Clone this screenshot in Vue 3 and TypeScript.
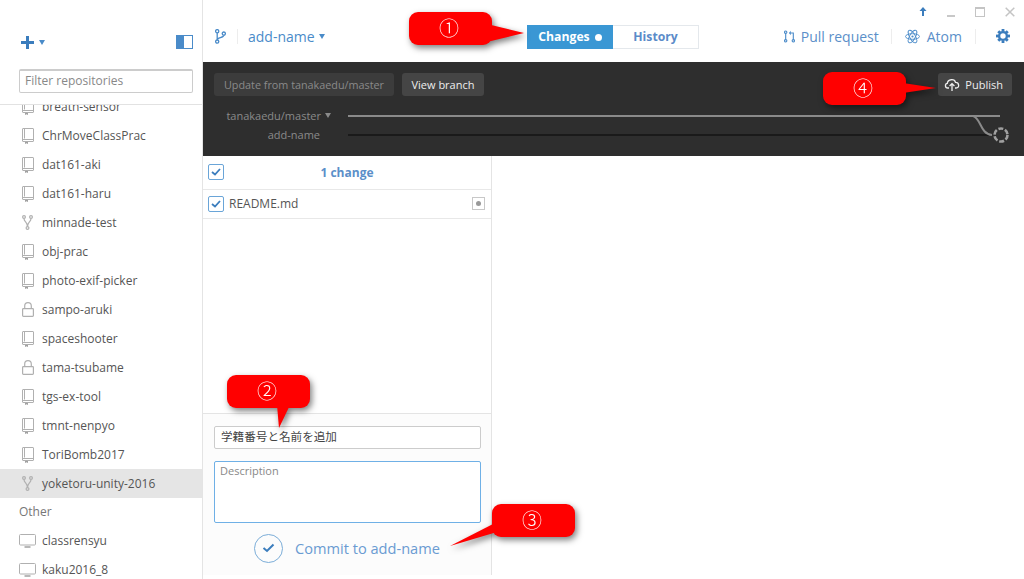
<template>
  <div class="app">
    <!-- 左側：リポジトリ一覧 -->
    <aside class="side">
      <header class="side__head">
        <div class="side__tools">
          <span class="add">
            <svg width="13" height="13" viewBox="0 0 13 13"><path d="M5 0h3v5h5v3H8v5H5V8H0V5h5z" fill="#3b7dbd" /></svg>
            <i class="caret"></i>
          </span>
          <svg width="17" height="14" viewBox="0 0 17 14">
            <rect x="0.5" y="0.5" width="16" height="13" fill="#fff" stroke="#4a8bc9" />
            <rect x="1" y="1" width="7" height="12" fill="#4a8bc9" />
          </svg>
        </div>
        <div class="filter">Filter repositories</div>
      </header>
      <div class="repos">
        <div class="repos__inner">
          <div v-for="r in repos" :key="r.name" class="repo" :class="{ active: r.active }">
            <span class="repo__icon">
              <svg v-if="r.icon === 'book'" width="12" height="16" viewBox="0 0 12 16" fill="none" stroke="#b0b0b0">
                <rect x="0.5" y="0.5" width="11" height="13" rx="0.5" />
                <path d="M2.5 1v9.5M1 11.5h10" />
                <path d="M3 14h3v2l-1.500-.8L3 16z" fill="#a0a0a0" stroke="none" />
              </svg>
              <svg v-else-if="r.icon === 'fork'" width="11" height="15" viewBox="0 0 11 15" fill="none" stroke="#b0b0b0" stroke-width="1.2">
                <circle cx="2" cy="2" r="1.4" />
                <circle cx="9" cy="2" r="1.4" />
                <circle cx="5.5" cy="13" r="1.4" />
                <path d="M2 3.5c0 3.500 3.500 3.500 3.500 8M9 3.500c0 3.500-3.500 3.500-3.500 8" />
              </svg>
              <svg v-else-if="r.icon === 'lock'" width="12" height="15" viewBox="0 0 12 15" fill="none" stroke="#b0b0b0" stroke-width="1.2">
                <rect x="0.6" y="6.6" width="10.8" height="7.8" rx="0.8" />
                <path d="M2.700 6.500V4a3.300 3.300 0 0 1 6.600 0v2.500" />
              </svg>
              <svg v-else class="repo__screen" width="17" height="14" viewBox="0 0 17 14" fill="none" stroke="#b0b0b0">
                <rect x="0.5" y="0.5" width="16" height="10.5" rx="1" />
                <path d="M5.500 13h6" stroke-width="1.8" />
              </svg>
            </span>
            <span class="repo__name">{{ r.name }}</span>
            <span v-if="r.group" class="repo__group">{{ r.group }}</span>
          </div>
        </div>
      </div>
    </aside>

    <main class="main">
      <!-- 上部バー -->
      <header class="top">
        <div class="winbtns">
          <svg width="8" height="9" viewBox="0 0 8 9"><path d="M4 0l3.500 4H5v5H3V4H.5z" fill="#3b7dbd" /></svg>
          <span class="win win--min"></span>
          <span class="win win--max"></span>
          <svg width="10" height="10" viewBox="0 0 10 10"><path d="M.7.7l8.600 8.600M9.300.7L.7 9.300" stroke="#c4c4c4" stroke-width="1.5" /></svg>
        </div>
        <div class="bar">
          <div class="branch">
            <svg width="11" height="15" viewBox="0 0 11 15" fill="none" stroke="#4a8bc9" stroke-width="1.3">
              <circle cx="2.2" cy="2.2" r="1.6" />
              <circle cx="2.2" cy="12.6" r="1.6" />
              <circle cx="8.8" cy="4.6" r="1.6" />
              <path d="M2.200 3.800V11M8.800 6.200c0 2.600-6.600 2.200-6.600 4.600" />
            </svg>
            <span class="sep"></span>
            <span class="branch__name">add-name</span>
            <i class="caret caret--sm"></i>
          </div>
          <div class="tabs">
            <span class="tab tab--on">Changes<i class="dot"></i></span>
            <span class="tab">History</span>
          </div>
          <div class="actions">
            <span class="action action--pull">
              <svg width="11" height="15" viewBox="0 0 13 15" fill="none" stroke="#4a8bc9" stroke-width="1.3">
                <circle cx="2" cy="2.4" r="1.4" />
                <circle cx="2" cy="12.6" r="1.4" />
                <circle cx="11" cy="12.6" r="1.4" />
                <path d="M2 4v7M11 11V3.400H7" />
                <path d="M8 .8L5.800 3.400 8 6" fill="#4a8bc9" stroke="none" />
              </svg>
              Pull request
            </span>
            <span class="sep"></span>
            <span class="action action--atom">
              <svg width="15" height="15" viewBox="0 0 15 15" fill="none" stroke="#4a8bc9" stroke-width="0.9">
                <ellipse cx="7.5" cy="7.5" rx="7" ry="2.8" />
                <ellipse cx="7.5" cy="7.5" rx="7" ry="2.8" transform="rotate(60 7.5 7.5)" />
                <ellipse cx="7.5" cy="7.5" rx="7" ry="2.8" transform="rotate(120 7.5 7.5)" />
                <circle cx="7.5" cy="7.5" r="1.1" fill="#4a8bc9" stroke="none" />
              </svg>
              Atom
            </span>
            <span class="sep"></span>
            <svg class="gear" width="14" height="14" viewBox="0 0 14 14">
              <circle cx="7" cy="7" r="3.9" fill="none" stroke="#3b7dbd" stroke-width="2.4" />
              <g fill="#3b7dbd">
                <rect x="5.6" y="0" width="2.8" height="2.6" />
                <rect x="5.6" y="11.4" width="2.8" height="2.6" />
                <rect x="0" y="5.6" width="2.6" height="2.8" />
                <rect x="11.4" y="5.6" width="2.6" height="2.8" />
                <rect x="5.6" y="0.3" width="2.8" height="2.6" transform="rotate(45 7 7)" />
                <rect x="5.6" y="11.1" width="2.8" height="2.6" transform="rotate(45 7 7)" />
                <rect x="0.3" y="5.6" width="2.6" height="2.8" transform="rotate(45 7 7)" />
                <rect x="11.1" y="5.6" width="2.6" height="2.8" transform="rotate(45 7 7)" />
              </g>
            </svg>
          </div>
        </div>
      </header>

      <!-- 黒いブランチ帯 -->
      <section class="graph">
        <div class="graph__btns">
          <span class="dbtn dbtn--off">Update from tanakaedu/master</span>
          <span class="dbtn">View branch</span>
          <span class="dbtn dbtn--pub">
            <svg width="16" height="13" viewBox="0 0 16 13" fill="none" stroke="#eee" stroke-width="1.3">
              <path d="M5 10H3.600C1 10 .6 5.800 3.300 5.400 3.800 1 10.500.4 11.500 4.400 15 4.200 16.200 10 12 10h-1" />
              <path d="M8 13V6M5.600 8L8 5.600 10.400 8" />
            </svg>
            Publish
          </span>
        </div>
        <div class="graph__rows">
          <div class="graph__labels">
            <span>tanakaedu/master<i class="tri"></i></span>
            <span class="label2">add-name</span>
          </div>
          <div class="graph__lines">
            <svg width="664" height="36" viewBox="0 0 664 36" fill="none">
              <path d="M0 5H652" stroke="#8a8a8a" stroke-width="2" />
              <path d="M0 24H644" stroke="#1a1a1a" stroke-width="2" />
              <path d="M625 5c8 2 7 18 19 19" stroke="#8a8a8a" stroke-width="2" />
              <circle cx="653" cy="24" r="6.5" stroke="#a0a0a0" stroke-width="2.6" stroke-dasharray="5 1.8" />
            </svg>
          </div>
        </div>
      </section>

      <div class="body">
        <section class="changes">
          <div class="changes__head">
            <span class="check">
              <svg width="10" height="8" viewBox="0 0 10 8"><path d="M1 4l3 2.500L9 1" fill="none" stroke="#3b7dbd" stroke-width="1.8" /></svg>
            </span>
            <span class="changes__count">1 change</span>
          </div>
          <div class="file">
            <span class="check">
              <svg width="10" height="8" viewBox="0 0 10 8"><path d="M1 4l3 2.500L9 1" fill="none" stroke="#3b7dbd" stroke-width="1.8" /></svg>
            </span>
            <span class="file__name">README.md</span>
            <span class="file__mark"><i></i></span>
          </div>
          <div class="changes__space"></div>
          <footer class="commit">
            <div class="commit__title">学籍番号と名前を追加</div>
            <div class="commit__desc">Description</div>
            <div class="commit__btn">
              <span class="commit__circle">
                <svg width="13" height="10" viewBox="0 0 13 10"><path d="M1.500 5l3.500 3 6.500-6.500" fill="none" stroke="#3b7dbd" stroke-width="2" /></svg>
              </span>
              Commit to add-name
            </div>
          </footer>
        </section>
        <section class="diff"></section>
      </div>
    </main>

    <!-- 吹き出し注釈：スクリーンショットの上に載せる -->
    <div
      v-for="c in callouts"
      :key="c.num"
      class="callout"
      :style="{ left: c.x + 'px', top: c.y + 'px' }"
    >
      <svg class="callout__tail" width="170" height="110" viewBox="-45 -30 170 110">
        <path :d="c.tail" fill="#ff0000" />
      </svg>
      <span class="callout__num">{{ c.num }}</span>
    </div>
  </div>
</template>

<script setup lang="ts">
interface Repo {
  name: string
  icon: 'book' | 'fork' | 'lock' | 'screen'
  active?: boolean
  group?: string
}

const repos: Repo[] = [
  { name: 'breath-sensor', icon: 'book' },
  { name: 'ChrMoveClassPrac', icon: 'book' },
  { name: 'dat161-aki', icon: 'book' },
  { name: 'dat161-haru', icon: 'book' },
  { name: 'minnade-test', icon: 'fork' },
  { name: 'obj-prac', icon: 'book' },
  { name: 'photo-exif-picker', icon: 'book' },
  { name: 'sampo-aruki', icon: 'lock' },
  { name: 'spaceshooter', icon: 'book' },
  { name: 'tama-tsubame', icon: 'lock' },
  { name: 'tgs-ex-tool', icon: 'book' },
  { name: 'tmnt-nenpyo', icon: 'book' },
  { name: 'ToriBomb2017', icon: 'book' },
  { name: 'yoketoru-unity-2016', icon: 'fork', active: true },
  { name: 'classrensyu', icon: 'screen', group: 'Other' },
  { name: 'kaku2016_8', icon: 'screen' },
]

// 吹き出しの位置としっぽの形（本体左上が原点）
const callouts = [
  { num: '①', x: 409, y: 12, tail: 'M78 12L115 21 78 30z' },
  { num: '②', x: 227, y: 375, tail: 'M50 30L52 53 63 30z' },
  { num: '③', x: 492, y: 504, tail: 'M3 19L-42 42 5 28z' },
  { num: '④', x: 823, y: 72, tail: 'M80 11L113 16 80 21z' },
]
</script>

<style>
body {
  background: #fff;
}
</style>

<style scoped>
.app {
  position: relative;
  display: flex;
  overflow: hidden;
  width: 1024px;
  height: 579px;
  font-family: 'Open Sans', 'Noto Sans CJK JP', sans-serif;
  font-size: 12px;
  color: #555;
  background: #fff;
}

/* サイドバー */
.side {
  display: flex;
  flex-direction: column;
  flex: none;
  width: 202px;
  height: 579px;
  border-right: 1px solid #e4e4e4;
}

.side__head {
  flex: none;
  box-sizing: border-box;
  height: 105px;
  padding: 35px 9px 0 19px;
  border-bottom: 1px solid #e2e2e2;
}

.side__tools {
  display: flex;
  align-items: center;
  justify-content: space-between;
  height: 14px;
}

.add {
  display: flex;
  align-items: center;
  gap: 5px;
  margin-left: 2px;
}

.caret {
  width: 0;
  height: 0;
  border-top: 5px solid #4a8bc9;
  border-right: 3px solid transparent;
  border-left: 3px solid transparent;
}

.caret--sm {
  margin-left: 4px;
}

.filter {
  box-sizing: border-box;
  height: 24px;
  margin-top: 20px;
  padding-left: 5px;
  font-size: 12px;
  line-height: 20px;
  color: #888;
  border: 1px solid #ccc;
  border-top-width: 2px;
  border-radius: 2px;
}

.repos {
  overflow: hidden;
  flex: 1;
}

.repos__inner {
  margin-top: -13px;
}

.repo {
  position: relative;
  display: flex;
  align-items: center;
  height: 29px;
  padding-left: 22px;
  color: #555;
}

.repo.active {
  background: #e5e5e5;
}

.repo:has(.repo__group) {
  margin-top: 28px;
}

.repo__group {
  position: absolute;
  top: -29px;
  left: 19px;
  line-height: 29px;
  color: #777;
}

.repo__icon {
  display: flex;
  flex: none;
  align-items: center;
  width: 20px;
}

.repo__screen {
  flex: none;
  margin-left: -3px;
}

.repo__name {
  white-space: nowrap;
}

/* メイン */
.main {
  display: flex;
  flex: 1;
  flex-direction: column;
  min-width: 0;
}

.top {
  flex: none;
  box-sizing: border-box;
  height: 62px;
}

.winbtns {
  display: flex;
  align-items: center;
  justify-content: flex-end;
  gap: 20px;
  height: 23px;
  padding-right: 9px;
}

.win--min {
  width: 8px;
  height: 2px;
  margin-top: 8px;
  background: #c8c8c8;
}

.win--max {
  box-sizing: border-box;
  width: 10px;
  height: 10px;
  border: 1px solid #c4c4c4;
  border-top-width: 2px;
}

.bar {
  display: flex;
  align-items: center;
  height: 26px;
  padding: 0 14px 0 12px;
}

.branch {
  display: flex;
  flex: none;
  align-items: center;
  width: 312px;
  font-size: 14px;
  color: #4a8bc9;
}

.branch .sep {
  margin: 0 10px 0 11px;
}

.sep {
  width: 1px;
  height: 15px;
  background: #ededed;
}

.tabs {
  display: flex;
  flex: none;
  align-self: flex-end;
  height: 24px;
}

.tab {
  display: flex;
  align-items: center;
  justify-content: center;
  box-sizing: border-box;
  width: 86px;
  padding-bottom: 2px;
  font-size: 12.2px;
  font-weight: 700;
  color: #5b8bc9;
  border: 1px solid #e4e8ec;
  border-left: none;
}

.tab--on {
  color: #fff;
  background: #3a97d4;
  border: none;
}

.dot {
  width: 7px;
  height: 7px;
  margin-top: 2px;
  margin-left: 5px;
  background: #fff;
  border-radius: 50%;
}

.actions {
  display: flex;
  align-items: center;
  gap: 13px;
  margin-left: auto;
}

.action {
  display: flex;
  align-items: center;
  gap: 6px;
  font-size: 14px;
  color: #5b8fc9;
}

.action--pull {
  margin-right: -1px;
}

.action--atom {
  gap: 7px;
}

.gear {
  margin-left: 7px;
}

.graph {
  flex: none;
  box-sizing: border-box;
  height: 94px;
  padding: 11px 12px 0 11px;
  background: #2e2e2e;
}

.graph__btns {
  display: flex;
  gap: 8px;
}

.dbtn {
  display: flex;
  align-items: center;
  height: 23px;
  padding: 0 9.5px;
  font-size: 11px;
  color: #eee;
  background: #454545;
  border-radius: 3px;
}

.dbtn--off {
  padding: 0 10px;
  font-size: 10.8px;
  color: #8a8a8a;
  background: #3c3c3c;
}

.dbtn--pub {
  gap: 5px;
  margin-left: auto;
  padding: 0 9px 0 6px;
}

.graph__rows {
  display: flex;
  margin-top: 15px;
}

.graph__labels {
  display: flex;
  flex-direction: column;
  align-items: flex-end;
  width: 117px;
  margin-top: -5px;
  font-size: 11px;
  line-height: 19px;
  color: #8a8a8a;
}

.label2 {
  padding-right: 11px;
}

.tri {
  display: inline-block;
  width: 0;
  height: 0;
  margin-left: 4px;
  border-top: 5px solid #8a8a8a;
  border-right: 3.5px solid transparent;
  border-left: 3.5px solid transparent;
  vertical-align: 2px;
}

.graph__lines {
  margin-left: 17px;
}

.graph__lines svg {
  display: block;
}

.body {
  display: flex;
  flex: 1;
  min-height: 0;
}

.changes {
  display: flex;
  flex: none;
  flex-direction: column;
  box-sizing: border-box;
  width: 289px;
  height: 419px;
  border-right: 1px solid #e4e4e4;
}

.changes__head {
  position: relative;
  display: flex;
  flex: none;
  align-items: center;
  justify-content: center;
  box-sizing: border-box;
  height: 34px;
  padding-bottom: 1px;
  border-bottom: 1px solid #e8e8e8;
}

.changes__head .check {
  position: absolute;
  top: 8px;
  left: 5px;
}

.changes__count {
  font-size: 12px;
  font-weight: 700;
  color: #5b8fc9;
}

.check {
  display: flex;
  flex: none;
  align-items: center;
  justify-content: center;
  box-sizing: border-box;
  width: 16px;
  height: 16px;
  border: 1px solid #6aa5d8;
  border-radius: 2px;
}

.file {
  display: flex;
  flex: none;
  align-items: center;
  box-sizing: border-box;
  height: 29px;
  padding: 0 5px 1px;
  border-bottom: 1px solid #e8e8e8;
}

.file__name {
  flex: 1;
  margin-left: 5px;
  color: #555;
}

.file__mark {
  display: flex;
  align-items: center;
  justify-content: center;
  box-sizing: border-box;
  width: 13px;
  height: 13px;
  margin-right: 1px;
  border: 1px solid #c8c8c8;
}

.file__mark i {
  width: 5px;
  height: 5px;
  background: #999;
  border-radius: 50%;
}

.changes__space {
  flex: 1;
}

.commit {
  flex: none;
  box-sizing: border-box;
  height: 162px;
  padding: 12px 10px 0 11px;
  background: #fcfcfc;
  border-top: 1px solid #e4e4e4;
}

.commit__title {
  box-sizing: border-box;
  height: 23px;
  padding-left: 6px;
  font-size: 11.6px;
  line-height: 20px;
  color: #444;
  background: #fff;
  border: 1px solid #ccc;
  border-radius: 2px;
}

.commit__desc {
  box-sizing: border-box;
  height: 62px;
  margin-top: 12px;
  padding: 1px 5px;
  font-size: 11px;
  color: #888;
  background: #fff;
  border: 1px solid #6fb0e6;
  border-radius: 2px;
}

.commit__btn {
  display: flex;
  align-items: center;
  justify-content: center;
  gap: 12px;
  height: 30px;
  margin-top: 10px;
  padding-right: 1px;
  font-size: 14.6px;
  color: #6a9bd2;
}

.commit__circle {
  display: flex;
  align-items: center;
  justify-content: center;
  box-sizing: border-box;
  width: 29px;
  height: 29px;
  border: 1px solid #7badd8;
  border-radius: 50%;
}

.diff {
  flex: 1;
}

/* 吹き出し */
.callout {
  position: absolute;
  display: flex;
  align-items: center;
  justify-content: center;
  box-sizing: border-box;
  width: 83px;
  height: 33px;
  padding: 0 3px 3px 0;
  font-family: 'Noto Sans CJK JP', sans-serif;
  font-size: 20px;
  font-weight: 300;
  color: #fff;
  background: #ff0000;
  border-radius: 9px;
  filter: drop-shadow(2px 3px 3px rgb(0 0 0 / 50%));
}

.callout__tail {
  position: absolute;
  top: -30px;
  left: -45px;
}

.callout__num {
  position: relative;
}
</style>
